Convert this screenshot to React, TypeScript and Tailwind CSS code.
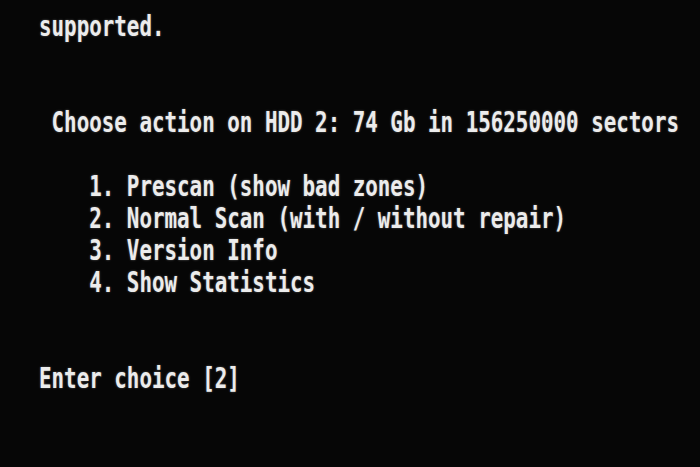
import { FC } from "react";

const lines: string[] = [
  "supported.",
  "",
  "",
  " Choose action on HDD 2: 74 Gb in 156250000 sectors",
  "",
  "    1. Prescan (show bad zones)",
  "    2. Normal Scan (with / without repair)",
  "    3. Version Info",
  "    4. Show Statistics",
  "",
  "",
  "Enter choice [2]",
];

const App: FC = () => {
  return (
    <div className="w-[700px] h-[467px] overflow-hidden bg-[#060606] pt-[11px] pl-[39px]">
      {lines.map((line, i) => (
        <div
          key={i}
          className="h-[32px] flex items-center whitespace-pre font-['DejaVu_Sans_Mono',monospace] font-bold text-[20.85px] leading-none text-[#ececec] scale-y-[1.32] [text-shadow:0_0_2px_rgba(255,255,255,0.35)]"
        >
          {line}
        </div>
      ))}
    </div>
  );
};

export default App;
